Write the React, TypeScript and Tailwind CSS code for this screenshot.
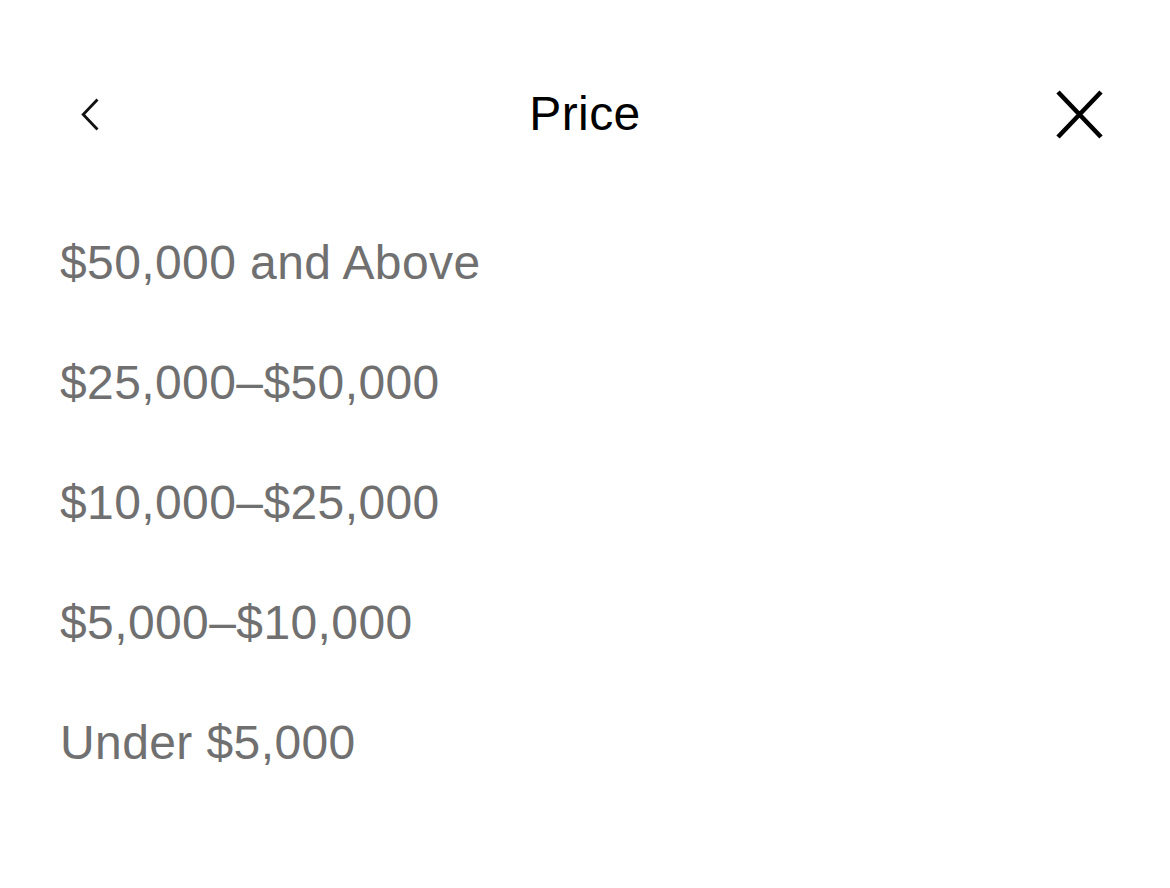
import React from "react";

const items = [
  "$50,000 and Above",
  "$25,000–$50,000",
  "$10,000–$25,000",
  "$5,000–$10,000",
  "Under $5,000",
];

export default function App() {
  return (
    <div
      className="w-[1170px] h-[888px] bg-white overflow-hidden"
      style={{ fontFamily: '"Liberation Sans", Arial, sans-serif' }}
    >
      <div className="pt-[54px] grid grid-cols-[1fr_auto_1fr] items-center h-[174px]">
        <div className="pl-[81px] flex items-center">
          <svg width="19" height="33" viewBox="0 0 19 33" fill="none">
            <path d="M16.5 1.5 L2.2 16.5 L16.5 31.5" stroke="#111" strokeWidth="2.8" />
          </svg>
        </div>
        <div className="text-[48px] leading-[120px] text-black tracking-[0.4px]">Price</div>
        <div className="pr-[67px] flex items-center justify-end">
          <svg width="47" height="49" viewBox="0 0 47 49" fill="none">
            <path d="M2 2 L45 47 M45 2 L2 47" stroke="#000" strokeWidth="4.6" />
          </svg>
        </div>
      </div>
      <div className="mt-[29px] pl-[60px] flex flex-col">
        {items.map((t) => (
          <div key={t} className="text-[48px] leading-[120px] text-[#707070] tracking-[0.4px]">
            {t}
          </div>
        ))}
      </div>
    </div>
  );
}
